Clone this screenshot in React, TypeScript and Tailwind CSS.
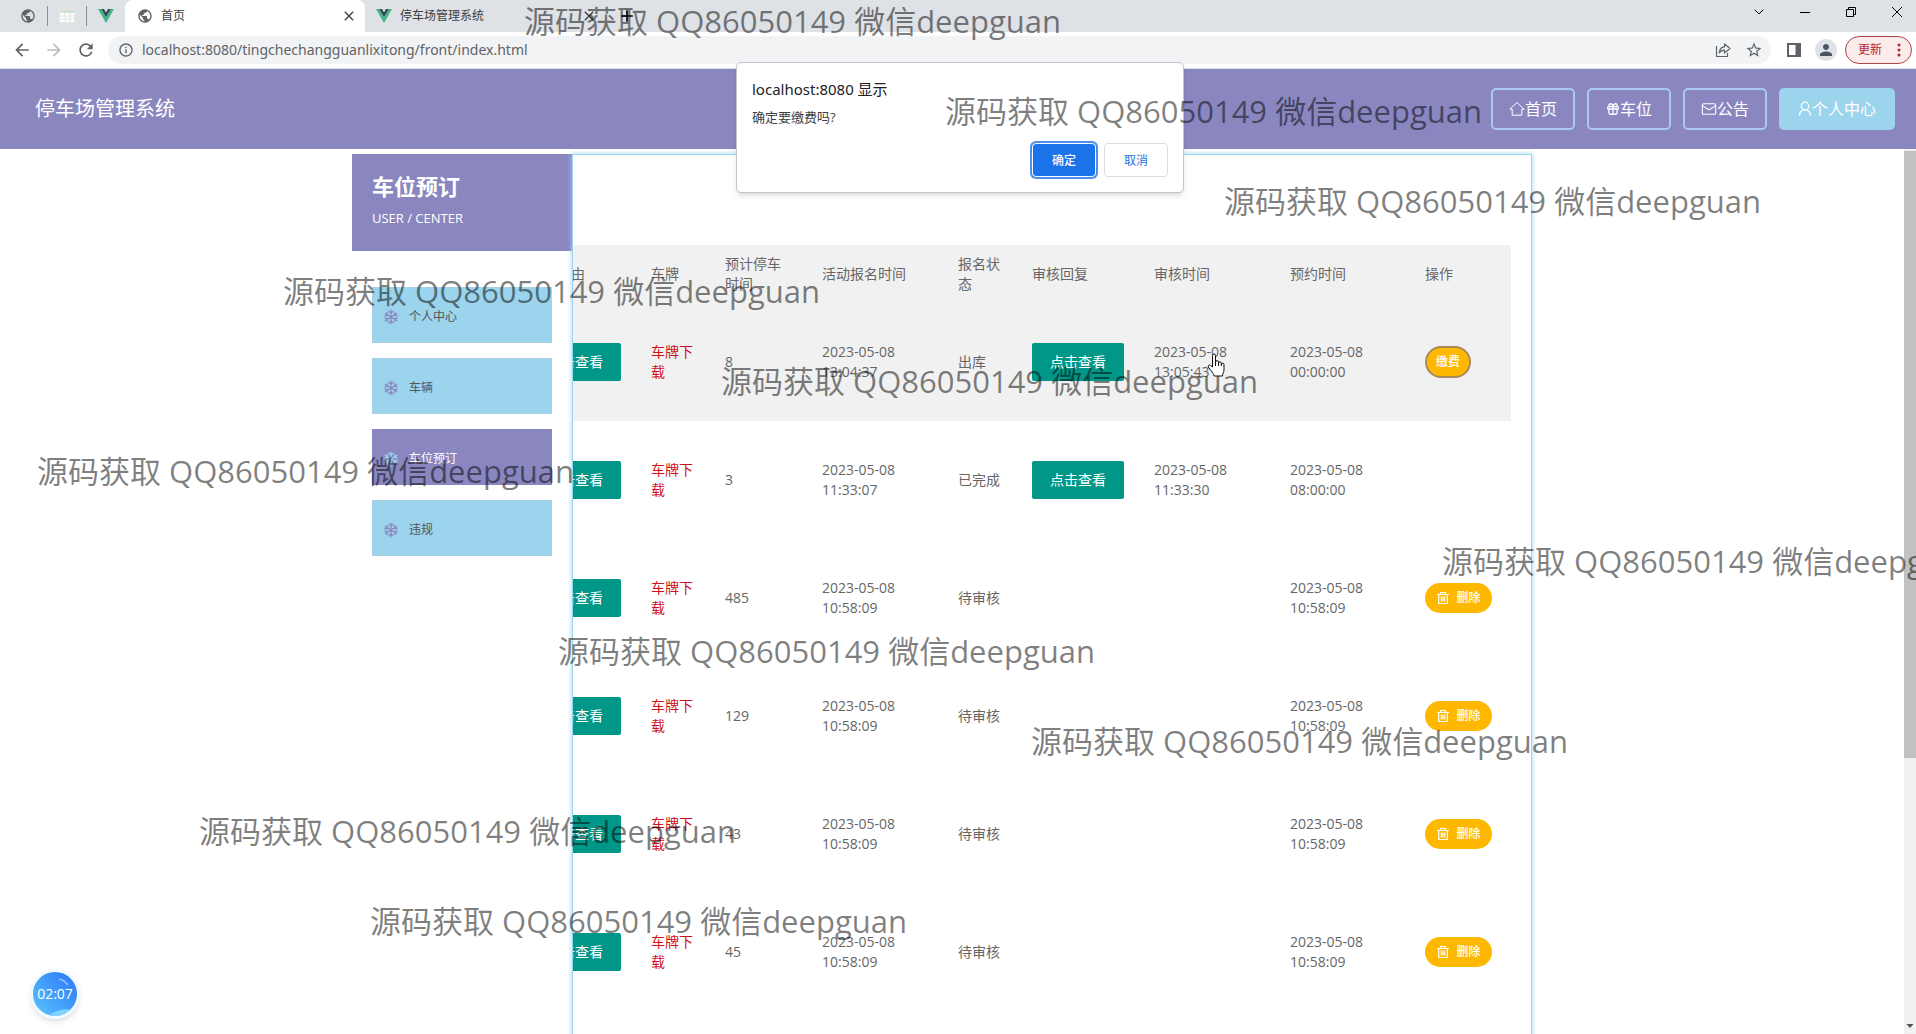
import React from 'react';
import { MdArrowBack, MdArrowForward, MdPublic, MdRefresh, MdStarOutline, MdInfoOutline, MdClose, MdPerson, MdAdd } from 'react-icons/md';
import { ChevronDown, Gift, Mail } from 'lucide-react';

function VueLogo() {
  return (
    <svg viewBox="0 0 16 14" className="h-3.5 w-4 shrink-0" aria-hidden="true">
      <path d="M0 0h3.2L8 8.2 12.8 0H16L8 14z" fill="#41b883" />
      <path d="M3.2 0H6l2 3.4L10 0h2.8L8 8.2z" fill="#35495e" />
    </svg>
  );
}

function SheetIcon() {
  return (
    <svg viewBox="0 0 16 14" className="h-3.5 w-4 shrink-0" aria-hidden="true">
      <rect x="0.5" y="0.5" width="15" height="13" fill="#fff" stroke="#e3e8e4" />
      <path d="M1 1h14v3H1z" fill="#cfe3d2" />
      <path d="M1 7h14M1 10h14M6 4v9M11 4v9" stroke="#e0e6e1" />
    </svg>
  );
}

function HomeIcon() {
  return (
    <svg viewBox="0 0 16 16" className="size-4 shrink-0" fill="none" stroke="currentColor" aria-hidden="true">
      <path d="M.8 8.200 8 1.500l7.200 6.700h-2.400v6H3.200v-6z" />
    </svg>
  );
}

function UserIcon() {
  return (
    <svg viewBox="0 0 14 16" className="h-4 w-3.5 shrink-0" fill="none" stroke="currentColor" strokeWidth="1.2" aria-hidden="true">
      <circle cx="7" cy="5" r="3.8" />
      <path d="M1.500 14.800c0-3.600 2.200-5.900 5.500-5.900s5.500 2.300 5.500 5.900" />
    </svg>
  );
}

function SnowIcon({ className }: { className: string }) {
  return (
    <svg viewBox="0 0 16 16" className={className} fill="none" stroke="currentColor" strokeWidth="1.2" strokeLinecap="round" aria-hidden="true">
      {[0, 60, 120, 180, 240, 300].map((a) => (
        <path key={a} d="M8 8V1.200M5.900 2.200 8 4.400l2.100-2.200" transform={`rotate(${a} 8 8)`} />
      ))}
    </svg>
  );
}

function TrashIcon() {
  return (
    <svg viewBox="0 0 14 14" className="size-3.5 shrink-0" fill="none" stroke="currentColor" strokeWidth="1.2" aria-hidden="true">
      <path d="M1 3.500h12M4.500 3.300V1.500h5v1.800M2.700 3.700v8.800h8.600V3.700M5.300 5.500v5M7 5.500v5M8.700 5.500v5" />
    </svg>
  );
}

function TabStrip() {
  return (
    <div className="flex h-8 shrink-0 items-stretch bg-[#dee1e6] text-xs text-[#3c4043]">
      <div className="flex w-[125px] shrink-0 items-center justify-between pr-[11px] pl-5">
        <MdPublic className="size-4 text-[#5f6368]" />
        <span className="h-5 w-px bg-[#8b8f94]" />
        <SheetIcon />
        <span className="h-5 w-px bg-[#8b8f94]" />
        <VueLogo />
      </div>
      <div className="flex w-[240px] shrink-0 items-center rounded-t-lg bg-white pr-2 pl-3">
        <MdPublic className="size-4 text-[#5f6368]" />
        <span className="ml-2 flex-1">首页</span>
        <button aria-label="关闭首页"><MdClose className="size-4" /></button>
      </div>
      <div className="flex w-[240px] shrink-0 items-center pr-2 pl-[11px]">
        <VueLogo />
        <span className="ml-2 flex-1">停车场管理系统</span>
        <button aria-label="关闭停车场管理系统"><MdClose className="size-4" /></button>
      </div>
      <button aria-label="新标签页" className="px-3 text-black"><MdAdd className="size-5" /></button>
      <div className="ml-auto flex items-center gap-[30px] pr-[11px] pb-2 text-black">
        <button aria-label="搜索标签页"><ChevronDown className="size-4" strokeWidth={1.5} /></button>
        <button aria-label="最小化">
          <svg viewBox="0 0 16 16" className="size-4" stroke="currentColor"><path d="M3 8.500h10" /></svg>
        </button>
        <button aria-label="还原">
          <svg viewBox="0 0 16 16" className="size-4" fill="none" stroke="currentColor"><path d="M3.500 5.500h7v7h-7zM5.500 5.500v-2h7v7h-2" /></svg>
        </button>
        <button aria-label="关闭">
          <svg viewBox="0 0 16 16" className="size-4" stroke="currentColor"><path d="m3 3 10 10M13 3 3 13" /></svg>
        </button>
      </div>
    </div>
  );
}

function Toolbar() {
  return (
    <div className="flex h-[37px] shrink-0 items-center border-b border-[#dcdce4] bg-white pr-1 text-[#5f6368]">
      <div className="flex w-[108px] shrink-0 items-center gap-3 pl-3">
        <button aria-label="后退"><MdArrowBack className="size-5" /></button>
        <button aria-label="前进"><MdArrowForward className="size-5 text-[#babcbe]" /></button>
        <button aria-label="刷新"><MdRefresh className="size-5" /></button>
      </div>
      <div className="flex h-7 flex-1 items-center rounded-full bg-[#f1f3f4] pr-2 pl-2.5">
        <MdInfoOutline className="size-4 shrink-0" />
        <label htmlFor="address" className="sr-only">地址</label>
        <input
          id="address"
          readOnly
          defaultValue="localhost:8080/tingchechangguanlixitong/front/index.html"
          className="ml-2 min-w-0 flex-1 bg-transparent font-['Noto_Sans',sans-serif] text-sm outline-none"
        />
        <button aria-label="分享">
          <svg viewBox="0 0 16 16" className="size-4" fill="none" stroke="currentColor" strokeWidth="1.2">
            <path d="M1.500 4v10.500h11V11" />
            <path d="M9.500 2v2.800C6 5 4.500 7.500 4.200 11c1.300-2 2.900-2.800 5.300-2.800V11L15 6.500z" strokeLinejoin="round" />
          </svg>
        </button>
        <button aria-label="收藏" className="ml-3.5"><MdStarOutline className="size-[18px]" /></button>
      </div>
      <button aria-label="侧边栏" className="ml-4">
        <svg viewBox="0 0 14 14" className="size-3.5"><path d="M1 1h12v12H1z" fill="none" stroke="currentColor" strokeWidth="2" /><path d="M8.500 1H13v12H8.500z" fill="currentColor" /></svg>
      </button>
      <button aria-label="用户" className="ml-3.5 flex size-[22px] items-center justify-center rounded-full bg-[#dee1e6] text-[#4a5263]">
        <MdPerson className="size-[18px]" />
      </button>
      <button className="ml-2 flex h-7 w-[67px] items-center justify-between rounded-full border border-[#b3434a] bg-[#fcebeb] pr-2.5 pl-3 text-xs text-[#b3262e]">
        更新
        <svg viewBox="0 0 4 16" className="h-4 w-1" fill="currentColor"><circle cx="2" cy="3" r="1.500" /><circle cx="2" cy="8" r="1.500" /><circle cx="2" cy="13" r="1.500" /></svg>
      </button>
    </div>
  );
}

const navClass = 'flex h-[42px] w-[84px] items-center justify-center rounded-[5px] border-2 border-[#a9c8f2] text-base text-white';

function SiteHeader() {
  return (
    <header className="flex h-20 shrink-0 items-center justify-between bg-[#8a87c0] pr-[21px] pl-[35px] text-white">
      <h1 className="text-xl">停车场管理系统</h1>
      <nav className="flex gap-3">
        <a href="#home" className={navClass}><HomeIcon />首页</a>
        <a href="#spaces" className={navClass}><Gift className="size-3.5" strokeWidth={2.200} />车位</a>
        <a href="#notices" className={navClass}><Mail className="size-4" strokeWidth={1.6} />公告</a>
        <a href="#me" className="flex h-[42px] w-[116px] items-center justify-center rounded-[5px] bg-[#9bd4ec] text-base text-white"><UserIcon />个人中心</a>
      </nav>
    </header>
  );
}

const menu = [
  { label: '个人中心', active: false },
  { label: '车辆', active: false },
  { label: '车位预订', active: true },
  { label: '违规', active: false },
];

function Sidebar() {
  return (
    <aside className="w-[220px] shrink-0">
      <div className="h-[97px] bg-[#8a87c0] px-5 pt-4 text-white">
        <h2 className="text-[22px] leading-8 font-bold">车位预订</h2>
        <p className="mt-1 text-[13px] leading-6">USER / CENTER</p>
      </div>
      <ul className="mt-9 flex flex-col gap-[15px] px-5">
        {menu.map((m) => (
          <li key={m.label}>
            <a
              href={'#' + m.label}
              className={
                m.active
                  ? 'flex h-14 items-center gap-2.5 border border-[#8a87c0] bg-[#8a87c0] pt-1 pl-2.5 text-xs text-white'
                  : 'flex h-14 items-center gap-2.5 border border-[#a9cfe2] bg-[#9bd4ec] pt-1 pl-2.5 text-xs text-[#555]'
              }
            >
              <SnowIcon className={m.active ? 'size-4 text-[#9bd4ec]' : 'size-4 text-[#8a87c0]'} />
              {m.label}
            </a>
          </li>
        ))}
      </ul>
    </aside>
  );
}

type Row = { hours: string; applied: string; status: string; reviewed?: string; booked: string; action?: 'pay' | 'delete' };

const rows: Row[] = [
  { hours: '8', applied: '2023-05-08 13:04:37', status: '出库', reviewed: '2023-05-08 13:05:43', booked: '2023-05-08 00:00:00', action: 'pay' },
  { hours: '3', applied: '2023-05-08 11:33:07', status: '已完成', reviewed: '2023-05-08 11:33:30', booked: '2023-05-08 08:00:00' },
  { hours: '485', applied: '2023-05-08 10:58:09', status: '待审核', booked: '2023-05-08 10:58:09', action: 'delete' },
  { hours: '129', applied: '2023-05-08 10:58:09', status: '待审核', booked: '2023-05-08 10:58:09', action: 'delete' },
  { hours: '43', applied: '2023-05-08 10:58:09', status: '待审核', booked: '2023-05-08 10:58:09', action: 'delete' },
  { hours: '45', applied: '2023-05-08 10:58:09', status: '待审核', booked: '2023-05-08 10:58:09', action: 'delete' },
];

function ViewButton() {
  return <button className="h-[38px] w-[92px] rounded-xs bg-[#009688] text-sm text-white">点击查看</button>;
}

function BookingTable() {
  return (
    <div className="flex justify-end overflow-hidden">
      <table className="w-[997px] shrink-0 table-fixed text-left text-sm text-[#666]">
        <colgroup>
          <col className="w-[122px]" />
          <col className="w-[74px]" />
          <col className="w-[97px]" />
          <col className="w-[136px]" />
          <col className="w-[74px]" />
          <col className="w-[122px]" />
          <col className="w-[136px]" />
          <col className="w-[135px]" />
          <col className="w-[101px]" />
        </colgroup>
        <thead>
          <tr className="h-[58px] bg-[#f1f1f1] [&>th]:px-[15px] [&>th]:font-normal">
            <th>申请理由</th>
            <th>车牌</th>
            <th>预计停车时间</th>
            <th>活动报名时间</th>
            <th>报名状态</th>
            <th>审核回复</th>
            <th>审核时间</th>
            <th>预约时间</th>
            <th>操作</th>
          </tr>
        </thead>
        <tbody>
          {rows.map((r, i) => (
            <tr key={r.hours} className={i === 0 ? 'h-[118px] bg-[#f1f1f1] [&>td]:px-[15px]' : 'h-[118px] [&>td]:px-[15px]'}>
              <td><ViewButton /></td>
              <td><a href="#plate" className="text-[#d01018]">车牌下载</a></td>
              <td>{r.hours}</td>
              <td>{r.applied}</td>
              <td>{r.status}</td>
              <td>{r.reviewed && <ViewButton />}</td>
              <td>{r.reviewed}</td>
              <td>{r.booked}</td>
              <td>
                {r.action === 'pay' && (
                  <button className="h-8 w-[46px] rounded-full border-2 border-[#a8895a] bg-[#ffb800] text-xs font-medium text-white">缴费</button>
                )}
                {r.action === 'delete' && (
                  <button className="flex h-[30px] w-[67px] items-center justify-center gap-1.5 rounded-full bg-[#ffb800] text-xs font-medium text-white">
                    <TrashIcon />删除
                  </button>
                )}
              </td>
            </tr>
          ))}
        </tbody>
      </table>
    </div>
  );
}

function ConfirmDialog() {
  return (
    <div role="dialog" aria-labelledby="dialog-title" className="absolute top-[62px] left-1/2 ml-[-222px] w-[448px] rounded-[5px] border border-[#c4c4cc] bg-white px-[15px] pt-3.5 pb-[15px] shadow-md">
      <h2 id="dialog-title" className="font-['Noto_Sans','Noto_Sans_CJK_SC',sans-serif] text-[15px] leading-6 text-[#202124]">localhost:8080 显示</h2>
      <p className="mt-1 text-[13px] leading-6 text-[#3c4043]">确定要缴费吗?</p>
      <div className="mt-3.5 flex justify-end gap-2">
        <button className="h-[34px] w-16 rounded-sm border border-white bg-[#1a73e8] pt-0.5 text-xs font-medium text-white ring-2 ring-[#4a90ee]">确定</button>
        <button className="h-[34px] w-16 rounded-sm border border-[#dadce0] pt-0.5 text-xs text-[#1a73e8]">取消</button>
      </div>
    </div>
  );
}

const marks = [
  [524, 21], [945, 111], [1224, 201], [283, 291], [721, 381], [37, 471],
  [1442, 561], [558, 651], [1031, 741], [199, 831], [370, 921],
];

function Watermarks() {
  return (
    <div className="pointer-events-none absolute inset-0 overflow-hidden">
      {marks.map(([x, y]) => (
        <span key={y} className="absolute -translate-y-1/2 text-[31px] leading-10 whitespace-nowrap text-black/50" style={{ left: x, top: y }}>
          源码获取 QQ86050149 微信deepguan
        </span>
      ))}
    </div>
  );
}

function RecorderBadge() {
  return (
    <div className="absolute bottom-[15px] left-[30px] flex size-[50px] items-center justify-center overflow-hidden rounded-full border-3 border-[#f0fbff] bg-linear-to-bl from-[#2f74f5] to-[#5cc4fd] text-sm text-white shadow-md">
      <svg viewBox="0 0 44 44" className="absolute inset-0 size-full" fill="none" aria-hidden="true">
        <path d="M26 7q5 1 9 6" stroke="#8fc0ff" strokeWidth="1.500" />
        <path d="M15 44q11-9 26-6l-6 6z" fill="#7fd4ff" />
      </svg>
      <span className="relative">02:07</span>
    </div>
  );
}

function HandCursor() {
  return (
    <svg viewBox="0 0 18 24" className="absolute top-[353px] left-[1207px] h-6 w-[18px]" fill="#fff" stroke="#111" strokeLinejoin="round" aria-hidden="true">
      <path d="M5.500 14V2.500a1.500 1.500 0 0 1 3 0V9a1.400 1.400 0 0 1 3 .3v.7a1.400 1.400 0 0 1 2.800.5v.8a1.300 1.300 0 0 1 2.700.5V17c0 2-1.500 3.500-1.500 6H7c0-2-2-3.500-3-5.500L1.300 14c-.7-1.600 1-2.600 2.200-1.500z" />
      <path d="M8.500 9v4M11.500 10v3M14.300 11v2" />
    </svg>
  );
}

export default function App() {
  return (
    <div className="relative flex h-screen flex-col overflow-hidden bg-white font-['Open_Sans','Noto_Sans_CJK_SC',sans-serif]">
      <TabStrip />
      <Toolbar />
      <SiteHeader />
      <div className="flex min-h-0 flex-1">
        <main className="min-w-0 flex-1 overflow-hidden pt-[5px]">
          <div className="mx-auto flex h-full w-full max-w-[1200px] pr-5">
            <Sidebar />
            <section className="min-w-0 flex-1 self-start border border-[#9bd4ec] pt-[90px] pr-5 pb-10 shadow-[0_0_5px_#9bd4ec]">
              <BookingTable />
            </section>
          </div>
        </main>
        <div className="flex w-3 shrink-0 flex-col justify-between bg-[#f1f1f1] pt-0.5 pb-1">
          <div className="h-[69%] bg-[#c1c1c1]" />
          <svg viewBox="0 0 12 8" className="h-2 w-3" fill="#505050" aria-hidden="true"><path d="M2.500 2h7L6 6z" /></svg>
        </div>
      </div>
      <ConfirmDialog />
      <HandCursor />
      <RecorderBadge />
      <Watermarks />
    </div>
  );
}
